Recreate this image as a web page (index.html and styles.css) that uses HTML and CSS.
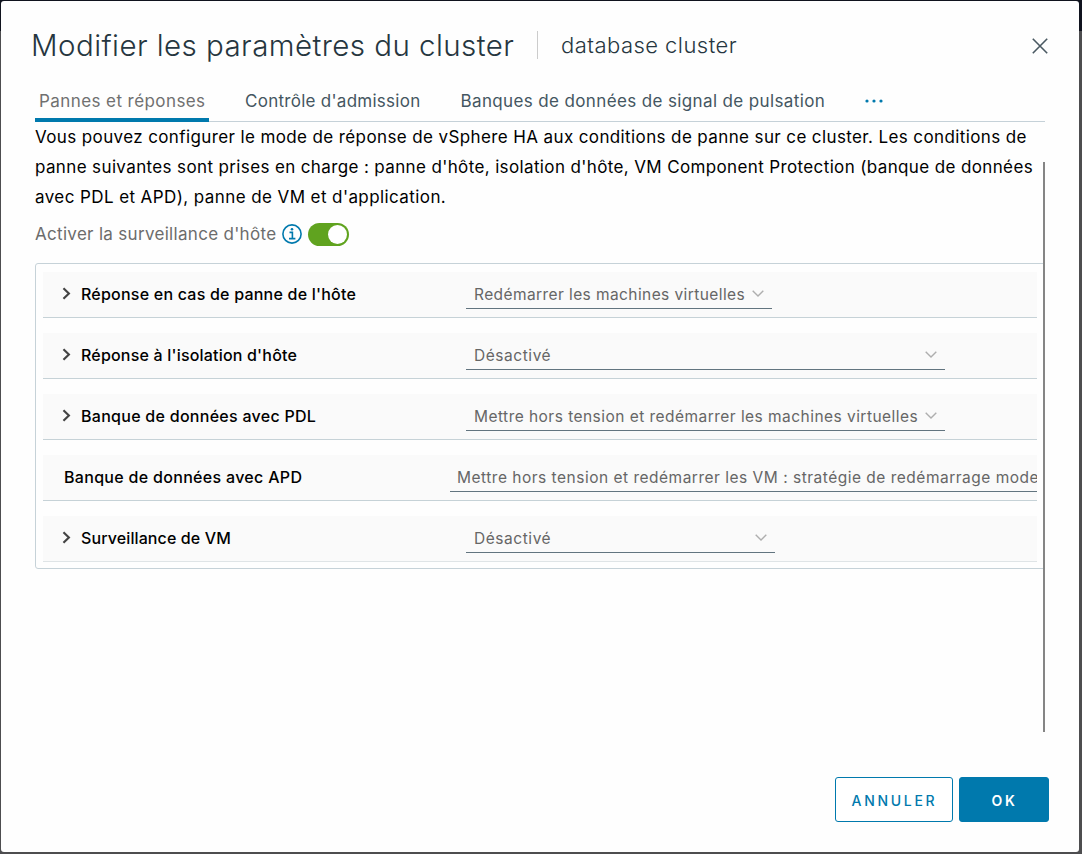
FILE: index.html
```html
<!DOCTYPE html>
<html lang="fr">
<head>
<meta charset="utf-8">
<title>Modifier les paramètres du cluster</title>
<link rel="stylesheet" href="styles.css">
</head>
<body>
<div class="backdrop">
<main class="modal" role="dialog">
  <header class="header">
    <h1 class="title">Modifier les paramètres du cluster</h1>
    <span class="subtitle">database cluster</span>
    <svg class="close" viewBox="0 0 16 16"><path d="M.8.8l14.4 14.4M15.2.8L.8 15.2"/></svg>
  </header>
  <nav class="tabs">
    <a class="tab tab-active"><span class="t1">Pannes et réponses</span></a>
    <a class="tab"><span class="t2">Contrôle d'admission</span></a>
    <a class="tab"><span class="t3">Banques de données de signal de pulsation</span></a>
    <svg class="more" viewBox="0 0 18 4"><circle cx="2" cy="2" r="1.6"/><circle cx="9" cy="2" r="1.6"/><circle cx="16" cy="2" r="1.6"/></svg>
  </nav>
  <section class="body">
    <p class="intro"><span class="p1">Vous pouvez configurer le mode de réponse de vSphere HA aux conditions de panne sur ce cluster. Les conditions de</span><br><span class="p2">panne suivantes sont prises en charge : panne d'hôte, isolation d'hôte, VM Component Protection (banque de données</span><br><span class="p3">avec PDL et APD), panne de VM et d'application.</span></p>
    <div class="monitor">
      <span class="monitor-label">Activer la surveillance d'hôte</span>
      <svg class="info" viewBox="0 0 20 20"><circle cx="10" cy="10" r="9.1"/><path d="M7.5 8.4h2.9v6.1M7 14.6h6.4"/><circle class="dot" cx="10" cy="5.3" r="1.3"/></svg>
      <span class="toggle"></span>
    </div>
    <div class="panel">
      <div class="row"><svg class="caret" viewBox="0 0 8 12"><path d="M1.2 1.2L6.2 6l-5 4.8"/></svg><b class="name r1">Réponse en cas de panne de l'hôte</b><div class="select w1"><span class="s1">Redémarrer les machines virtuelles</span><svg class="chev" viewBox="0 0 12 7"><path d="M.7.7L6 6 11.3.7"/></svg></div></div>
      <div class="row"><svg class="caret" viewBox="0 0 8 12"><path d="M1.2 1.2L6.2 6l-5 4.8"/></svg><b class="name r2">Réponse à l'isolation d'hôte</b><div class="select w2"><span class="s2">Désactivé</span><svg class="chev" viewBox="0 0 12 7"><path d="M.7.7L6 6 11.3.7"/></svg></div></div>
      <div class="row"><svg class="caret" viewBox="0 0 8 12"><path d="M1.2 1.2L6.2 6l-5 4.8"/></svg><b class="name r3">Banque de données avec PDL</b><div class="select w2"><span class="s3">Mettre hors tension et redémarrer les machines virtuelles</span><svg class="chev" viewBox="0 0 12 7"><path d="M.7.7L6 6 11.3.7"/></svg></div></div>
      <div class="row row-flat"><b class="name r4">Banque de données avec APD</b><div class="select w4"><span class="s4">Mettre hors tension et redémarrer les VM : stratégie de redémarrage mode</span></div></div>
      <div class="row row-last"><svg class="caret" viewBox="0 0 8 12"><path d="M1.2 1.2L6.2 6l-5 4.8"/></svg><b class="name r5">Surveillance de VM</b><div class="select w5"><span class="s2">Désactivé</span><svg class="chev" viewBox="0 0 12 7"><path d="M.7.7L6 6 11.3.7"/></svg></div></div>
    </div>
    <i class="scrollbar"></i>
  </section>
  <footer class="footer">
    <button class="btn">ANNULER</button>
    <button class="btn btn-primary">OK</button>
  </footer>
</main>
</div>
</body>
</html>
```
FILE: styles.css
```css
* { box-sizing: border-box; }
body { margin: 0; font-family: Inter, "Liberation Sans", sans-serif; overflow: hidden; }
svg { fill: none; flex: none; }
.backdrop { width: 1082px; height: 854px; padding: 1px 3px 2px 1px; background: linear-gradient(#10131e 31px, #4d4d4f 31px); }
.modal { position: relative; width: 1078px; height: 851px; background: #fefefe; border-radius: 3px; display: flex; flex-direction: column; }
.header { height: 86px; display: flex; align-items: center; padding: 3px 31px 0 30px; color: #263640; flex: none; }
.title { margin: -2px 0 0; width: 507px; height: 28px; line-height: 29px; font-size: 29.5px; font-weight: 300; letter-spacing: .44px; border-right: 1px solid #ccc; white-space: nowrap; }
.subtitle { margin-left: 23px; font-size: 22px; font-weight: 300; letter-spacing: .46px; line-height: 26px; margin-top: -1px; white-space: nowrap; }
.close { width: 16px; height: 16px; margin-left: auto; stroke: #4a5962; stroke-width: 1.6; }
.tabs { height: 35px; margin: 0 34px; display: flex; border-bottom: 1px solid #c5d1d8; flex: none; color: #445661; }
.tab { height: 35px; line-height: 28px; margin-right: 32px; padding: 0 4px; font-size: 17px; white-space: nowrap; }
.tab-active { width: 174px; border-bottom: 4px solid #0079ad; color: #707070; }
.t1 { letter-spacing: .42px; }
.t2 { letter-spacing: .27px; }
.t3 { letter-spacing: .37px; }
.more { width: 18px; height: 4px; margin: 12px 0 0 4px; fill: #0079ad; }
.body { position: relative; margin: 0 34px; height: 611px; overflow: hidden; flex: none; }
.intro { margin: 0; line-height: 30px; font-size: 17px; color: #000; white-space: nowrap; }
.p1 { letter-spacing: .385px; }
.p2 { letter-spacing: .37px; }
.p3 { letter-spacing: .41px; }
.monitor { height: 45px; display: flex; align-items: center; padding-bottom: 1px; color: #6c6c6c; font-size: 17px; white-space: nowrap; }
.monitor-label { width: 247px; letter-spacing: .31px; line-height: 20px; margin-top: -1px; }
.info { width: 20px; height: 20px; stroke: #0079ad; stroke-width: 1.6; }
.info .dot { fill: #0079ad; stroke: none; }
.toggle { width: 41px; height: 23px; margin-left: 6px; border-radius: 12px; background: #60a31f; padding: 2px 2px 2px 20px; }
.toggle::before { content: ""; display: block; width: 19px; height: 19px; border-radius: 50%; background: #fff; }
.panel { margin-top: 6px; width: 1016px; height: 306px; border: 1px solid #c6d2d8; border-radius: 3px; padding: 8px 0 0 7px; display: flex; flex-direction: column; gap: 15px; }
.row { width: 994px; height: 46px; background: #fafafa; border-bottom: 1px solid #c6d2d7; padding-left: 19px; display: flex; overflow: hidden; flex: none; }
.row-last { border-color: #dfe4e6; }
.row-flat { padding-left: 21px; }
.caret { width: 9px; height: 13px; margin: 15px 10px 0 0; stroke: #444; stroke-width: 2; }
.name { width: 385px; line-height: 45px; font-size: 16px; font-weight: 500; white-space: nowrap; flex: none; }
.row-flat .name { width: 386px; }
.r1 { letter-spacing: .22px; }
.r2 { letter-spacing: .19px; }
.r3 { letter-spacing: .28px; }
.r4 { letter-spacing: .31px; }
.r5 { letter-spacing: .11px; }
.select { height: 37px; line-height: 46px; border-bottom: 1px solid #62747f; padding: 0 8px; display: flex; justify-content: space-between; flex: none; color: #666; font-size: 15.5px; white-space: nowrap; }
.w4 { padding-left: 7px; }
.s1 { letter-spacing: .41px; }
.s2 { letter-spacing: .55px; }
.s3 { letter-spacing: .46px; }
.s4 { letter-spacing: .5px; }
.chev { width: 12px; height: 7px; margin-top: 18px; stroke: #aeaeae; stroke-width: 1.4; }
.w1 { width: 306px; } .w2 { width: 479px; } .w4 { width: 650px; } .w5 { width: 309px; }
.scrollbar { position: absolute; right: 0; top: 40px; width: 2px; height: 570px; background: #858585; }
.footer { display: flex; justify-content: flex-end; gap: 6px; padding: 44px 30px 0 0; }
.btn { width: 118px; height: 45px; padding: 2px 0 0 1px; border: 1px solid #0079ad; border-radius: 3px; background: #fff; color: #0079ad; font: 500 14px Inter, sans-serif; letter-spacing: 2.7px; }
.btn-primary { width: 90px; background: #0079ad; color: #fff; font-weight: 600; }
```
